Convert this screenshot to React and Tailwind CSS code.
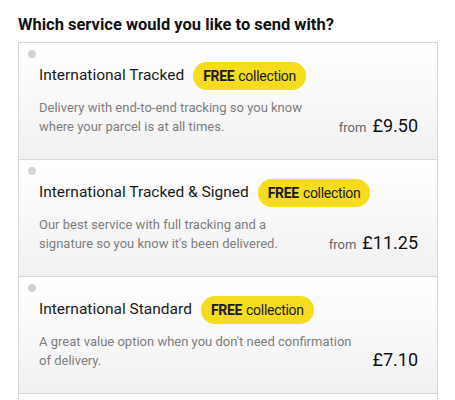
import React from "react";

const services = [
  {
    name: "International Tracked",
    desc: "Delivery with end-to-end tracking so you know where your parcel is at all times.",
    from: true,
    price: "£9.50",
  },
  {
    name: "International Tracked & Signed",
    desc: "Our best service with full tracking and a signature so you know it's been delivered.",
    from: true,
    price: "£11.25",
  },
  {
    name: "International Standard",
    desc: "A great value option when you don't need confirmation of delivery.",
    from: false,
    price: "£7.10",
  },
];

function Card({ s }) {
  return (
    <div className="bg-gradient-to-b from-white to-[#f1f1f1] pt-[7px] pb-[23px] border-b border-[#d6d6d6]">
      <div className="pl-[9px]">
        <div className="w-2 h-2 rounded-full bg-[#d3d3d3]" />
      </div>
      <div className="pl-5 pr-[19px] mt-[4px]">
        <div className="flex items-center h-[28px]">
          <span className="text-[15.5px] text-[#1a1a1a] leading-none">{s.name}</span>
          <span className="ml-[9px] h-[28px] flex items-center rounded-full bg-[#f5dc1e] px-[10px] text-[14px] tracking-[-0.3px] text-[#1a1a1a] leading-none">
            <span className="font-bold">FREE</span>
            <span className="ml-[4px]">collection</span>
          </span>
        </div>
        <div className="flex items-end mt-[9px]">
          <p className="flex-1 pr-4 text-[13px] leading-[18.5px] text-[#7e7e7e]">{s.desc}</p>
          <div className="flex items-baseline whitespace-nowrap leading-none mb-[1px]">
            {s.from && <span className="text-[13px] text-[#666] mr-[6px]">from</span>}
            <span className="text-[18px] text-[#111]">{s.price}</span>
          </div>
        </div>
      </div>
    </div>
  );
}

export default function App() {
  return (
    <div
      className="bg-white w-[455px] h-[400px] overflow-hidden px-[18px] pt-[14px]"
      style={{ fontFamily: "Roboto, 'Liberation Sans', sans-serif" }}
    >
      <h2 className="text-[16.5px] font-bold text-[#111] leading-[22px] mb-[6px]">
        Which service would you like to send with?
      </h2>
      <div className="w-[420px] border-x border-t border-[#d6d6d6]">
        {services.map((s, i) => (
          <Card key={i} s={s} />
        ))}
        <div className="h-[40px] bg-white" />
      </div>
    </div>
  );
}
